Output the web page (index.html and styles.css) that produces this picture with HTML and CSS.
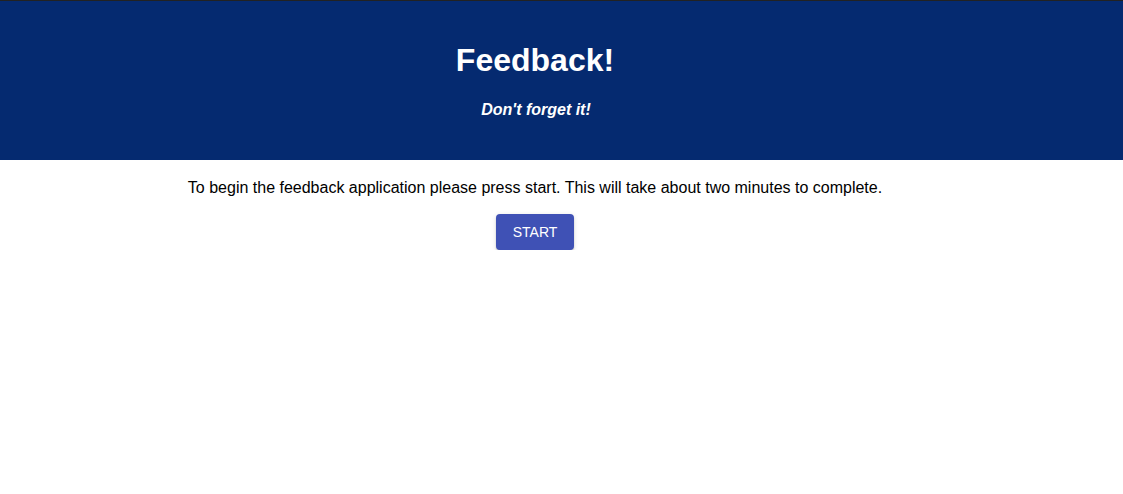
FILE: index.html
```html
<!DOCTYPE html>
<html>
<head>
<meta charset="utf-8">
<link rel="stylesheet" href="styles.css">
</head>
<body>
<header class="hero">
  <div class="wrap">
    <h1 class="title">Feedback!</h1>
    <p class="subtitle">Don't forget it!</p>
  </div>
</header>
<main class="wrap content">
  <p class="intro">To begin the feedback application please press start. This will take about two minutes to complete.</p>
  <button class="start-btn">Start</button>
</main>
</body>
</html>
```
FILE: styles.css
```css
html, body {
  margin: 0;
  padding: 0;
  background: #fff;
}
body {
  font-family: "Liberation Sans", Arial, Helvetica, sans-serif;
  color: #000;
  border-top: 1px solid #222;
}
.wrap {
  width: 1070px;
  text-align: center;
}
.hero {
  background: #052a70;
  color: #fff;
  height: 159px;
  box-sizing: border-box;
  padding-top: 41px;
}
.title {
  margin: 0;
  font-size: 32px;
  line-height: 37px;
  font-weight: bold;
}
.subtitle {
  margin: 22px 0 0;
  padding-left: 2px;
  font-size: 16px;
  line-height: 18px;
  font-weight: bold;
  font-style: italic;
}
.content {
  padding-top: 19px;
}
.intro {
  margin: 0 0 17px;
  font-size: 16px;
  line-height: 18.4px;
}
.start-btn {
  font-family: "Liberation Sans", Arial, Helvetica, sans-serif;
  font-size: 14px;
  font-weight: 500;
  text-transform: uppercase;
  color: #fff;
  background: #3f51b5;
  border: none;
  border-radius: 4px;
  height: 36px;
  padding: 0 17px;
  box-shadow: 0 3px 1px -2px rgba(0,0,0,.2), 0 2px 2px 0 rgba(0,0,0,.14), 0 1px 5px 0 rgba(0,0,0,.12);
  cursor: pointer;
}
```
